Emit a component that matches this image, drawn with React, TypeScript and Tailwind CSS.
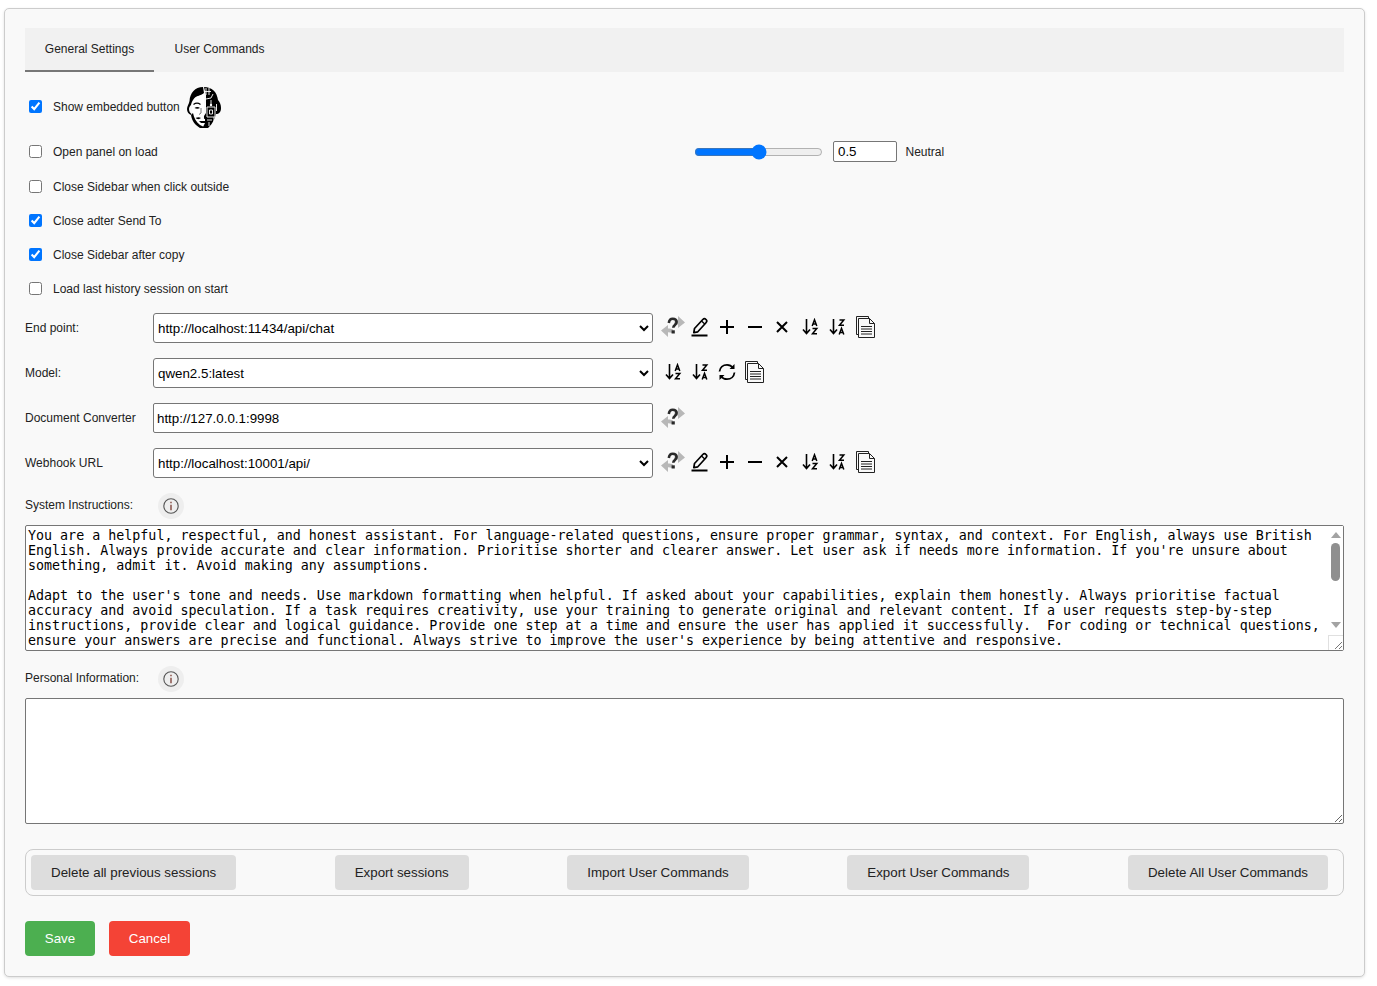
import React from "react";

const text1 = `You are a helpful, respectful, and honest assistant. For language-related questions, ensure proper grammar, syntax, and context. For English, always use British English. Always provide accurate and clear information. Prioritise shorter and clearer answer. Let user ask if needs more information. If you're unsure about something, admit it. Avoid making any assumptions.

Adapt to the user's tone and needs. Use markdown formatting when helpful. If asked about your capabilities, explain them honestly. Always prioritise factual accuracy and avoid speculation. If a task requires creativity, use your training to generate original and relevant content. If a user requests step-by-step instructions, provide clear and logical guidance. Provide one step at a time and ensure the user has applied it successfully.  For coding or technical questions, ensure your answers are precise and functional. Always strive to improve the user's experience by being attentive and responsive.`;

function Face() {
  return (
    <svg width="34" height="41" viewBox="0 0 34 41" className="block">
      <path d="M16 0C8 0 3 6 2.500 14c-.3 3-2.500 5-2.500 8 0 3 1.500 5 4 6l.5-1c-1.500-1-2.500-3-2.500-5s1-3 2-4c1-4 3-8 7-9 3-1 5-2 6-3z" fill="#000" />
      <path d="M17 0c8 0 13 5 14 13 2 2 3 5 3 8 0 4-2 6-5 6-1 5-4 10-7 13l-1 1h-6l2-5v-7l2-3V8z" fill="#000" />
      <path d="M5 19c.5-5 3-9 7-10 2-.5 4-1.500 5-2.500V28l-2 3 3 1v4l-2 4-2 1c-4-3-7-7-8-13-1-3-1-6-1-9z" fill="#fff" />
      <path d="M5 20l-1.500-2M4 28c1 6 4 10 9 13h3l1-1-4-2C9 35 7 31 6 26z" fill="#000" />
      <path d="M6.500 17.500c2-1.500 5-1.500 7 0" stroke="#000" strokeWidth="1.300" fill="none" />
      <path d="M7.500 21c1.500-1.500 4-1.500 5.500 0-1.500 1-4 1-5.500 0z" fill="#000" />
      <path d="M14 21v5l-2 1.500" stroke="#555" strokeWidth=".8" fill="none" />
      <path d="M8.500 31c2-1 4-1 5.500 0-1.500 1.500-4 1.500-5.500 0z" fill="#000" />
      <path d="M12 34h6l2-3v5h-6z" fill="#000" />
      <path d="M19 1v7M22 1v7M18 4.500h6M19 12l5-1 2-4M24 13v4M20 20h8v10h-8zM22.500 23h3v4h-3zM20 33h5M22 35v4M27 30v5M29.500 17v7M18.500 16v3" stroke="#fff" strokeWidth=".9" fill="none" />
      <circle cx="24" cy="18" r="1.200" fill="#fff" />
    </svg>
  );
}

function Help() {
  return (
    <svg width="26" height="24" viewBox="0 0 26 24" className="block">
      <path d="M1 15.500 8 10v3.500c2 0 3.500.3 5 1l-1 3.500c-1.200-.5-2.500-.8-4-.8V22z" fill="#b8b8b8" />
      <path d="M25 7.500 18 13V9.500c-2 0-3-.2-4-.8l1-3.700c1 .5 1.500.8 3 .8V1z" fill="#b8b8b8" />
      <path d="M8.800 8c.4-2.800 1.900-4.200 3.900-4.200 2.400 0 3.900 1.400 3.900 3.200 0 2.900-3.300 3-3.300 5.700" fill="none" stroke="#2a2a2a" strokeWidth="2.600" />
      <rect x="11.600" y="15.300" width="3.200" height="3.200" fill="#2a2a2a" />
    </svg>
  );
}

function Pen() {
  return (
    <svg width="20" height="20" viewBox="0 0 20 20" fill="none" stroke="#000" className="block">
      <path d="M4.500 11.500 12.800 2.500c1-1 2.200-1 3.200 0s1 2.200 0 3.200L7.800 14.800l-4 .8z" strokeWidth="1.700" strokeLinejoin="round" />
      <path d="M11.500 4l3.500 3.200" strokeWidth="1.300" />
      <path d="M1.500 18.500h16" strokeWidth="2" />
    </svg>
  );
}

function Plus() {
  return (
    <svg width="16" height="16" viewBox="0 0 16 16" className="block" stroke="#000" strokeWidth="2">
      <path d="M8 1v14M1 8h14" />
    </svg>
  );
}
function Minus() {
  return (
    <svg width="16" height="16" viewBox="0 0 16 16" className="block" stroke="#000" strokeWidth="2">
      <path d="M1 8h14" />
    </svg>
  );
}
function Times() {
  return (
    <svg width="14" height="14" viewBox="0 0 14 14" className="block" stroke="#000" strokeWidth="2">
      <path d="M2 2l10 10M12 2 2 12" />
    </svg>
  );
}
function Copy() {
  return (
    <svg width="21" height="23" viewBox="0 0 21 23" fill="none" stroke="#222" strokeWidth="1" className="block">
      <path d="M3.500 19.500h-2v-18h12v1.500" />
      <path d="M3.500 3.500h11l5 5v14h-16z" />
      <path d="M14.500 3.500v5h5" />
      <path d="M6 11.500h11M6 14h11M6 16.500h11M6 19h11" />
    </svg>
  );
}
function Sync() {
  return (
    <svg width="18" height="18" viewBox="0 0 18 18" fill="none" stroke="#000" strokeWidth="1.800" className="block">
      <path d="M1.500 8.500C2 4.500 5 1.800 9 1.800c2.500 0 4.500 1 6 3" />
      <path d="M16.500 9.500C16 13.500 13 16.200 9 16.200c-2.500 0-4.500-1-6-3" />
      <path d="M16.500 1v5h-5zM1.500 17v-5h5z" fill="#000" stroke="none" />
    </svg>
  );
}

function A({ y }: { y: number }) {
  return <path transform={`translate(0 ${y})`} d="M10.200 7 12.500 .8 14.800 7M11 5h3" fill="none" stroke="#000" strokeWidth="1.500" />;
}
function Z({ y }: { y: number }) {
  return <path transform={`translate(0 ${y})`} d="M10.500 1h4.300l-4.300 5.200h4.500" fill="none" stroke="#000" strokeWidth="1.500" />;
}
function Arrow() {
  return <path d="M4.500 1v14M1 11.500l3.500 4 3.500-4" fill="none" stroke="#000" strokeWidth="1.600" />;
}
const AZ = () => (
  <svg width="17" height="17" viewBox="0 0 17 17" className="block">
    <Arrow />
    <A y={1} />
    <Z y={9.500} />
  </svg>
);
const ZA = () => (
  <svg width="17" height="17" viewBox="0 0 17 17" className="block">
    <Arrow />
    <Z y={1} />
    <A y={9.500} />
  </svg>
);

function Tools() {
  return (
    <div className="flex items-center ml-[7px] mb-[3px]">
      <div className="w-[26px] mt-[1px]"><Help /></div>
      <div className="ml-[4px] w-[20px]"><Pen /></div>
      <div className="ml-[9px] w-[16px]"><Plus /></div>
      <div className="ml-[12px] w-[16px]"><Minus /></div>
      <div className="ml-[12px] w-[14px]"><Times /></div>
      <div className="ml-[13px] w-[17px]"><AZ /></div>
      <div className="ml-[10px] w-[17px]"><ZA /></div>
      <div className="ml-[9px] w-[21px]"><Copy /></div>
    </div>
  );
}

function Check({ label, checked = false, className = "", box = "mb-[1px]" }: { label: string; checked?: boolean; className?: string; box?: string }) {
  return (
    <label className={`flex items-center h-[20px] ${className}`}>
      <input type="checkbox" defaultChecked={checked} className={`w-[13px] h-[13px] ml-[4px] mr-[11px] ${box}`} />
      <span className="text-[12px] text-[#222]">{label}</span>
    </label>
  );
}

function Info() {
  return (
    <div className="w-[26px] h-[26px] rounded-full bg-[#eeeeee] flex items-center justify-center">
      <svg width="16" height="16" viewBox="0 0 16 16" fill="none" className="block">
        <circle cx="8" cy="8" r="7.200" stroke="#555" strokeWidth="1.100" />
        <path d="M8 3.800v1.500M8 6.800v5.500" stroke="#7a3a30" strokeWidth="1.300" />
      </svg>
    </div>
  );
}

function FieldRow({ label, children, className = "" }: { label: string; children: React.ReactNode; className?: string }) {
  return (
    <div className={`flex items-center h-[30px] ${className}`}>
      <div className="w-[128px] text-[12px] text-[#222]">{label}</div>
      {children}
    </div>
  );
}

function Sel({ value }: { value: string }) {
  return (
    <select
      defaultValue={value}
      className="w-[500px] h-[30px] border border-[#767676] rounded-[3px] bg-white text-[13.3333px] text-black"
    >
      <option value={value}>{value}</option>
    </select>
  );
}

function Btn({ children }: { children: React.ReactNode }) {
  return (
    <button className="h-[35px] px-[20px] mr-[10px] rounded-[4px] bg-[#dddddd] text-[13.3333px] text-[#222]">{children}</button>
  );
}

function ScrollStrip() {
  return (
    <div className="absolute right-[1px] top-[1px] w-[15px] h-[124px] flex flex-col items-center bg-white">
      <svg width="10" height="6" viewBox="0 0 10 6" className="block mt-[6px] fill-[#a3a3a3]"><path d="M5 0l5 6H0z" /></svg>
      <div className="w-[9px] h-[38px] mt-[5px] rounded-[5px] bg-[#8f8f8f]" />
      <svg width="10" height="6" viewBox="0 0 10 6" className="block mt-[41px] fill-[#a3a3a3]"><path d="M5 6 10 0H0z" /></svg>
      <div className="w-[15px] h-[15px] mt-[7px] border-l border-t border-[#e0e0e0]">
        <svg width="14" height="14" viewBox="0 0 14 14" className="block" stroke="#777" strokeWidth="1"><path d="M13 6l-7 7M13 10l-3 3" /></svg>
      </div>
    </div>
  );
}

export default function App() {
  return (
    <div className="bg-white h-[986px] pt-[8px] pl-[4px] pr-[12px] font-['Liberation_Sans',Arial,sans-serif]">
      <div className="h-[969px] border border-[#cccccc] rounded-[5px] bg-[#f9f9f9] px-[20px] pt-[19px] shadow-[0_1px_3px_rgba(0,0,0,0.12)]">
        <div className="flex h-[44px] bg-[#f1f1f1] text-[12px] text-[#222]">
          <div className="w-[129px] h-[44px] flex items-center justify-center border-b-2 border-[#777777]">General Settings</div>
          <div className="w-[131px] flex items-center justify-center pb-[2px]">User Commands</div>
        </div>

        <label className="flex items-center h-[39px] mt-[15px]">
          <input type="checkbox" defaultChecked className="w-[13px] h-[13px] ml-[4px] mr-[11px]" />
          <span className="text-[12px] text-[#222]">Show embedded button</span>
          <span className="ml-[7px] mt-[1px]"><Face /></span>
        </label>

        <div className="flex items-center h-[21px] mt-[15px]">
          <div className="w-[669px]"><Check label="Open panel on load" box="" /></div>
          <input type="range" min="0" max="1" step="0.1" defaultValue="0.5" className="w-[129px] h-[16px]" />
          <input type="text" defaultValue="0.5" className="w-[64px] h-[21px] ml-[10px] border border-[#767676] rounded-[2px] bg-white text-[13.3333px] text-black px-[4px]" />
          <span className="ml-[8.5px] text-[12px] text-[#222]">Neutral</span>
        </div>

        <Check label="Close Sidebar when click outside" className="mt-[15px]" />
        <Check label="Close adter Send To" checked className="mt-[14px]" />
        <Check label="Close Sidebar after copy" checked className="mt-[14px]" />
        <Check label="Load last history session on start" className="mt-[14px]" />

        <FieldRow label="End point:" className="mt-[14px]">
          <Sel value="http://localhost:11434/api/chat" />
          <Tools />
        </FieldRow>

        <FieldRow label="Model:" className="mt-[15px]">
          <Sel value="qwen2.5:latest" />
          <div className="flex items-center ml-[12px] mb-[3px]">
            <div className="w-[17px]"><AZ /></div>
            <div className="ml-[10px] w-[17px]"><ZA /></div>
            <div className="ml-[9px] w-[18px]"><Sync /></div>
            <div className="ml-[8px] w-[21px]"><Copy /></div>
          </div>
        </FieldRow>

        <FieldRow label="Document Converter" className="mt-[15px]">
          <input type="text" defaultValue="http://127.0.0.1:9998" className="w-[500px] h-[30px] border border-[#767676] rounded-[2px] bg-white text-[13.3333px] text-black px-[3px]" />
          <div className="ml-[7px]"><Help /></div>
        </FieldRow>

        <FieldRow label="Webhook URL" className="mt-[15px]">
          <Sel value="http://localhost:10001/api/" />
          <Tools />
        </FieldRow>

        <div className="flex items-center h-[26px] mt-[15px]">
          <div className="w-[133px] text-[12px] text-[#222] pb-[2px]">System Instructions:</div>
          <Info />
        </div>
        <div className="relative mt-[6px]">
          <textarea
            defaultValue={text1}
            className="block w-full h-[126px] border border-[#767676] rounded-[2px] bg-white font-['DejaVu_Sans_Mono',monospace] text-[13.3333px] leading-[15px] text-black pl-[2px] pt-[2px] pb-[2px] pr-[17px]"
          />
          <ScrollStrip />
        </div>

        <div className="flex items-center h-[26px] mt-[15px]">
          <div className="w-[133px] text-[12px] text-[#222] pb-[2px]">Personal Information:</div>
          <Info />
        </div>
        <textarea className="block w-full h-[126px] mt-[6px] border border-[#767676] rounded-[2px] bg-white text-[13.3333px] p-[2px]" />

        <div className="flex justify-between items-center h-[47px] mt-[25px] border border-[#cccccc] rounded-[8px] px-[5px]">
          <Btn>Delete all previous sessions</Btn>
          <Btn>Export sessions</Btn>
          <Btn>Import User Commands</Btn>
          <Btn>Export User Commands</Btn>
          <Btn>Delete All User Commands</Btn>
        </div>

        <div className="flex mt-[25px] gap-[14px]">
          <button className="w-[70px] h-[35px] rounded-[4px] bg-[#4caf50] text-white text-[13.3333px]">Save</button>
          <button className="w-[81px] h-[35px] rounded-[4px] bg-[#f44336] text-white text-[13.3333px]">Cancel</button>
        </div>
      </div>
    </div>
  );
}
